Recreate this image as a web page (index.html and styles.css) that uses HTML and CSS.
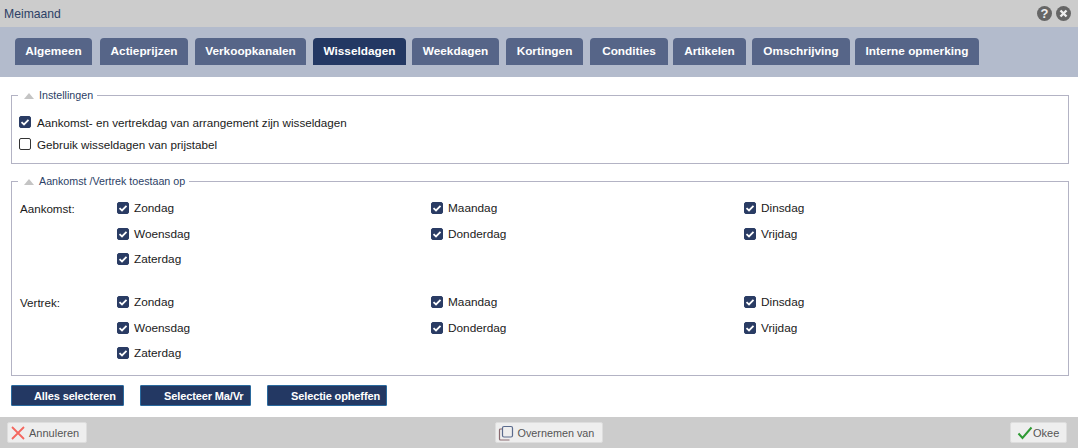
FILE: index.html
```html
<!DOCTYPE html>
<html lang="nl">
<head>
<meta charset="utf-8">
<title>Meimaand</title>
<link rel="stylesheet" href="styles.css">
</head>
<body>
<header class="titlebar">
  <span class="title">Meimaand</span>
  <span class="win-icons">
    <span class="win-icon">?</span>
    <svg class="win-svg" width="15" height="15" viewBox="0 0 15 15"><circle cx="7.5" cy="7.5" r="7.500" fill="#666"/><path d="M4.500 4.500l6 6M10.500 4.500l-6 6" stroke="#eee" stroke-width="2.400"/></svg>
  </span>
</header>
<nav class="tabs">
  <a class="tab t1">Algemeen</a>
  <a class="tab t2">Actieprijzen</a>
  <a class="tab t3">Verkoopkanalen</a>
  <a class="tab t4 active">Wisseldagen</a>
  <a class="tab t5">Weekdagen</a>
  <a class="tab t6">Kortingen</a>
  <a class="tab t7">Condities</a>
  <a class="tab t8">Artikelen</a>
  <a class="tab t9">Omschrijving</a>
  <a class="tab t10">Interne opmerking</a>
</nav>
<main class="content">
  <fieldset class="box box-settings">
    <legend class="legend"><span class="tri"></span>Instellingen</legend>
    <label class="check row-check"><span class="cb on"><svg viewBox="0 0 12 12" width="12" height="12"><path d="M2.500 6.200l2.500 2.300 4.500-4.600" fill="none" stroke="#fff" stroke-width="1.800"/></svg></span>Aankomst- en vertrekdag van arrangement zijn wisseldagen</label>
    <label class="check row-check"><span class="cb"></span>Gebruik wisseldagen van prijstabel</label>
  </fieldset>
  <fieldset class="box box-days">
    <legend class="legend"><span class="tri"></span>Aankomst /Vertrek toestaan op</legend>
    <div class="dayrow">
      <div class="daylabel">Aankomst:</div>
      <div class="daygrid">
        <label class="check"><span class="cb on"><svg viewBox="0 0 12 12" width="12" height="12"><path d="M2.500 6.200l2.500 2.300 4.500-4.600" fill="none" stroke="#fff" stroke-width="1.800"/></svg></span>Zondag</label>
        <label class="check"><span class="cb on"><svg viewBox="0 0 12 12" width="12" height="12"><path d="M2.500 6.200l2.500 2.300 4.500-4.600" fill="none" stroke="#fff" stroke-width="1.800"/></svg></span>Maandag</label>
        <label class="check"><span class="cb on"><svg viewBox="0 0 12 12" width="12" height="12"><path d="M2.500 6.200l2.500 2.300 4.500-4.600" fill="none" stroke="#fff" stroke-width="1.800"/></svg></span>Dinsdag</label>
        <label class="check"><span class="cb on"><svg viewBox="0 0 12 12" width="12" height="12"><path d="M2.500 6.200l2.500 2.300 4.500-4.600" fill="none" stroke="#fff" stroke-width="1.800"/></svg></span>Woensdag</label>
        <label class="check"><span class="cb on"><svg viewBox="0 0 12 12" width="12" height="12"><path d="M2.500 6.200l2.500 2.300 4.500-4.600" fill="none" stroke="#fff" stroke-width="1.800"/></svg></span>Donderdag</label>
        <label class="check"><span class="cb on"><svg viewBox="0 0 12 12" width="12" height="12"><path d="M2.500 6.200l2.500 2.300 4.500-4.600" fill="none" stroke="#fff" stroke-width="1.800"/></svg></span>Vrijdag</label>
        <label class="check"><span class="cb on"><svg viewBox="0 0 12 12" width="12" height="12"><path d="M2.500 6.200l2.500 2.300 4.500-4.600" fill="none" stroke="#fff" stroke-width="1.800"/></svg></span>Zaterdag</label>
      </div>
    </div>
    <div class="dayrow">
      <div class="daylabel">Vertrek:</div>
      <div class="daygrid">
        <label class="check"><span class="cb on"><svg viewBox="0 0 12 12" width="12" height="12"><path d="M2.500 6.200l2.500 2.300 4.500-4.600" fill="none" stroke="#fff" stroke-width="1.800"/></svg></span>Zondag</label>
        <label class="check"><span class="cb on"><svg viewBox="0 0 12 12" width="12" height="12"><path d="M2.500 6.200l2.500 2.300 4.500-4.600" fill="none" stroke="#fff" stroke-width="1.800"/></svg></span>Maandag</label>
        <label class="check"><span class="cb on"><svg viewBox="0 0 12 12" width="12" height="12"><path d="M2.500 6.200l2.500 2.300 4.500-4.600" fill="none" stroke="#fff" stroke-width="1.800"/></svg></span>Dinsdag</label>
        <label class="check"><span class="cb on"><svg viewBox="0 0 12 12" width="12" height="12"><path d="M2.500 6.200l2.500 2.300 4.500-4.600" fill="none" stroke="#fff" stroke-width="1.800"/></svg></span>Woensdag</label>
        <label class="check"><span class="cb on"><svg viewBox="0 0 12 12" width="12" height="12"><path d="M2.500 6.200l2.500 2.300 4.500-4.600" fill="none" stroke="#fff" stroke-width="1.800"/></svg></span>Donderdag</label>
        <label class="check"><span class="cb on"><svg viewBox="0 0 12 12" width="12" height="12"><path d="M2.500 6.200l2.500 2.300 4.500-4.600" fill="none" stroke="#fff" stroke-width="1.800"/></svg></span>Vrijdag</label>
        <label class="check"><span class="cb on"><svg viewBox="0 0 12 12" width="12" height="12"><path d="M2.500 6.200l2.500 2.300 4.500-4.600" fill="none" stroke="#fff" stroke-width="1.800"/></svg></span>Zaterdag</label>
      </div>
    </div>
  </fieldset>
  <div class="actions">
    <button class="act a1">Alles selecteren</button>
    <button class="act a2">Selecteer Ma/Vr</button>
    <button class="act a3">Selectie opheffen</button>
  </div>
</main>
<footer class="footer">
  <button class="fbtn f1"><svg width="16" height="16" viewBox="0 0 16 16"><path d="M2 2l12 12M14 2L2 14" stroke="#f4675f" stroke-width="1.800" fill="none"/></svg>Annuleren</button>
  <button class="fbtn f2"><svg width="16" height="16" viewBox="0 0 16 16"><rect x="4.500" y="1.500" width="10" height="10.500" rx="1.500" fill="none" stroke="#5a6a8c" stroke-width="1.200"/><path d="M4 4H2.500A1 1 0 0 0 1.500 5v9a1 1 0 0 0 1 1h9" fill="none" stroke="#8a6a70" stroke-width="1.200"/></svg>Overnemen van</button>
  <button class="fbtn f3"><svg width="16" height="14" viewBox="0 0 16 14"><path d="M1.500 7.500l4 4.500L14.500 1.500" fill="none" stroke="#2f9a34" stroke-width="2"/></svg>Okee</button>
</footer>
</body>
</html>
```
FILE: styles.css
```css
* { box-sizing: border-box; }
html, body { margin: 0; padding: 0; }
body {
  width: 1078px;
  height: 448px;
  overflow: hidden;
  background: #fff;
  font-family: "Liberation Sans", Arial, sans-serif;
  font-size: 12px;
  color: #1a1a1a;
  display: flex;
  flex-direction: column;
}
.titlebar {
  height: 27px;
  background: #cccccc;
  display: flex;
  align-items: center;
  justify-content: space-between;
  padding: 0 7px 0 4px;
  flex: none;
}
.title { color: #2c4166; font-size: 12.200px; }
.win-icons { display: flex; gap: 4px; align-items: center; }
.win-icon {
  width: 15px; height: 15px; border-radius: 50%;
  background: #666; color: #eee; font-weight: bold; font-size: 13px;
  line-height: 15px; text-align: center;
}
.win-svg { display: block; }
.tabs {
  height: 50px;
  background: #b3bbcc;
  flex: none;
  display: flex;
  padding: 11px 0 0 15px;
  align-items: flex-start;
}
.tab {
  height: 27px;
  background: #566588;
  color: #fff;
  font-weight: bold;
  font-size: 11.800px;
  line-height: 27px;
  text-align: center;
  border-radius: 4px 4px 0 0;
}
.tab.active { background: #233863; }
.t1 { width: 77px; margin-right: 8px; }
.t2 { width: 88px; margin-right: 7px; }
.t3 { width: 111px; margin-right: 7px; }
.t4 { width: 93px; margin-right: 6px; }
.t5 { width: 87px; margin-right: 7px; }
.t6 { width: 77px; margin-right: 7px; }
.t7 { width: 78px; margin-right: 5px; }
.t8 { width: 73px; margin-right: 6px; }
.t9 { width: 98px; margin-right: 5px; }
.t10 { width: 124px; }
.content { flex: 1; padding: 12px 9px 0 11px; }
.box {
  margin: 0;
  min-width: 0;
  border: 1px solid #b3b3c4;
  padding: 0;
}
.box-settings { height: 75px; padding: 9px 7px 0; margin-bottom: 11px; }
.box-days { height: 201px; padding: 2px 7px 0; }
.legend {
  margin-left: -1px;
  padding: 0 4px 0 6px;
  color: #2c4166;
  font-size: 10.700px;
  line-height: 13px;
  display: flex;
  align-items: center;
}
.tri {
  width: 0; height: 0;
  border-left: 5px solid transparent;
  border-right: 5px solid transparent;
  border-bottom: 6px solid #c4c4c4;
  margin-right: 5px;
}
.check { display: flex; align-items: center; height: 22px; color: #1a1a1a; }
.cb {
  width: 12px; height: 12px;
  border: 1px solid #333;
  border-radius: 2px;
  background: #fff;
  margin-right: 5px;
  flex: none;
  display: block;
}
.cb.on { background: #2a3c64; border-color: #2a3c64; }
.cb svg { display: block; margin: -1px; }
.row-check { font-size: 11.670px; }
.row-check .cb { margin-right: 6px; }
.dayrow { display: flex; margin-bottom: 12.250px; }
.daylabel { width: 98px; padding: 12px 0 0 1px; flex: none; line-height: 14px; font-size: 11.600px; }
.daygrid {
  flex: 1;
  display: grid;
  grid-template-columns: 314px 313px 1fr;
  grid-auto-rows: 25.500px;
  padding-top: 5.250px;
  align-items: center;
  font-size: 11.800px;
}
.daygrid .check { height: 25.500px; }
.actions { display: flex; padding-top: 9px; }
.act {
  height: 21px;
  background: #233863;
  border: 1px solid #2a6a9e;
  color: #fff;
  font: bold 11px "Liberation Sans", Arial, sans-serif;
  letter-spacing: -0.120px;
  padding: 0 0 0 22px;
  border-radius: 1px;
  white-space: nowrap;
  text-align: left;
}
.a1 { width: 113px; margin-right: 16px; }
.a2 { width: 111px; margin-right: 16px; padding-left: 23px; }
.a3 { width: 120px; padding-left: 23px; }
.footer {
  height: 31px;
  background: #cccccc;
  flex: none;
  display: flex;
  justify-content: space-between;
  align-items: center;
  padding: 0 11px 0 7px;
}
.fbtn {
  height: 21px;
  background: #eeeeee;
  border: 1px solid #dddddd;
  border-radius: 2px;
  color: #555;
  font: 11px "Liberation Sans", Arial, sans-serif;
  display: flex;
  align-items: center;
  padding: 0 2px;
  gap: 3px;
  white-space: nowrap;
}
.f1 { width: 80px; }
.f2 { width: 108px; gap: 4px; font-size: 10.800px; }
.f3 { width: 57px; gap: 0; padding-left: 6px; }
```
